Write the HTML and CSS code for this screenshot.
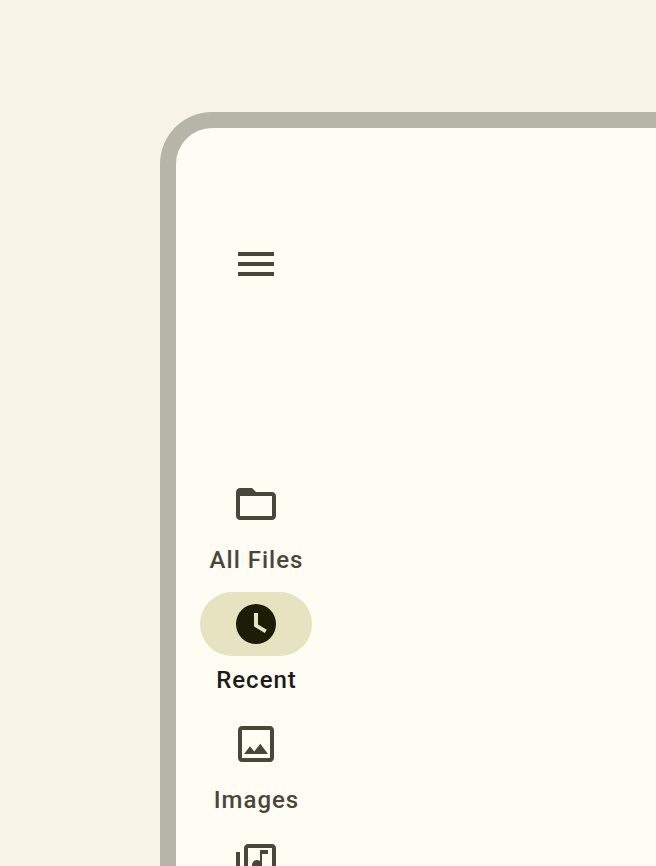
FILE: index.html
```html
<!DOCTYPE html>
<html lang="en">
<head>
<meta charset="utf-8">
<title>Files</title>
<link rel="stylesheet" href="styles.css">
</head>
<body>
<main class="device">
  <nav class="rail">
    <button class="menu" aria-label="Menu">
      <svg class="icon" viewBox="0 0 24 24"><path d="M3 18h18v-2H3v2zm0-5h18v-2H3v2zm0-7v2h18V6H3z"/></svg>
    </button>
    <a class="item">
      <span class="indicator"><svg class="icon" viewBox="0 0 24 24"><path d="M20 6h-8l-2-2H4c-1.1 0-2 .9-2 2v12c0 1.1.9 2 2 2h16c1.1 0 2-.9 2-2V8c0-1.1-.9-2-2-2zm0 12H4V8h16v10z"/></svg></span>
      <span class="label">All Files</span>
    </a>
    <a class="item active">
      <span class="indicator"><svg class="icon" viewBox="0 0 24 24"><path fill-rule="evenodd" d="M12 2a10 10 0 1 0 0 20 10 10 0 0 0 0-20zM11 6.5h2v5.7l4.4 2.7-1 1.6-5.4-3.3z"/></svg></span>
      <span class="label">Recent</span>
    </a>
    <a class="item">
      <span class="indicator"><svg class="icon" viewBox="0 0 24 24"><path d="M19 5v14H5V5h14m0-2H5c-1.1 0-2 .9-2 2v14c0 1.1.9 2 2 2h14c1.1 0 2-.9 2-2V5c0-1.1-.9-2-2-2zM14.14 11.86l-3 3.87L9 13.14 6 17h12z"/></svg></span>
      <span class="label">Images</span>
    </a>
    <a class="item">
      <span class="indicator"><svg class="icon" viewBox="0 0 24 24"><path d="M20 2H8c-1.1 0-2 .9-2 2v12c0 1.1.9 2 2 2h12c1.1 0 2-.9 2-2V4c0-1.1-.9-2-2-2zm0 14H8V4h12v12zm-7.5-1c1.38 0 2.5-1.12 2.5-2.5V7h3V5h-4v5.51c-.42-.32-.93-.51-1.5-.51-1.38 0-2.5 1.12-2.5 2.5s1.12 2.5 2.5 2.5zM4 6H2v14c0 1.1.9 2 2 2h14v-2H4V6z"/></svg></span>
    </a>
  </nav>
</main>
</body>
</html>
```
FILE: styles.css
```css
* {
  box-sizing: border-box;
}

body {
  margin: 0;
  height: 866px;
  padding: 112px 0 0 160px;
  overflow: hidden;
  background: #f7f3e7;
  font-family: Roboto, sans-serif;
}

.device {
  height: 754px;
  overflow: hidden;
  border: 16px solid #b7b5a8;
  border-right: 0;
  border-bottom: 0;
  border-radius: 52px 0 0 0;
  background: #fffcf4;
}

.rail {
  display: flex;
  flex-direction: column;
  align-items: center;
  gap: 16px;
  width: 160px;
  padding-top: 112px;
}

.menu {
  display: flex;
  margin-bottom: 168px;
  padding: 0;
  border: 0;
  background: none;
  color: #49473a;
}

.icon {
  display: block;
  width: 48px;
  height: 48px;
  fill: currentColor;
}

.item {
  display: flex;
  flex-direction: column;
  align-items: center;
  gap: 8px;
  color: #49473a;
}

.indicator {
  display: flex;
  align-items: center;
  justify-content: center;
  width: 112px;
  height: 64px;
  border-radius: 32px;
}

.label {
  padding-left: 1px;
  font-size: 24px;
  font-weight: 500;
  line-height: 32px;
  letter-spacing: 1px;
  white-space: nowrap;
}

.active .indicator {
  background: #e6e3c1;
  color: #1c1d06;
}

.active .label {
  color: #1c1c17;
}
```
